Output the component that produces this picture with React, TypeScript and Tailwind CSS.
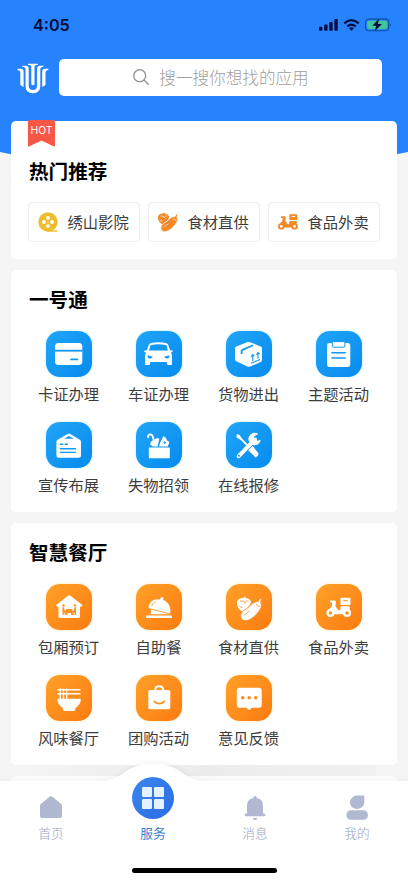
import React from 'react'

interface IconProps {
    cut: string;
}

interface ServiceItem {
    name: string;
    Icon: React.FC<IconProps>;
}

interface SectionProps {
    title: string;
    items: ServiceItem[];
    tone: 'blue' | 'orange';
}

/* Service glyphs share a 46x46 grid, cut is the colour of the inner details */
const CardIcon = ({ cut }: IconProps) => (
    <>
        <rect x="9" y="12" width="27.3" height="22" rx="3.4" />
        <path d="M9 19.7H36.3" stroke={cut} strokeWidth="1.8" />
        <path d="M25 28.4H31.4" stroke={cut} strokeWidth="1.7" strokeLinecap="round" />
    </>
)

const CarIcon = ({ cut }: IconProps) => (
    <>
        <path d="M15 11.9Q22.5 10.6 30 11.9Q31.6 12.2 32.3 14L34.1 19.2L36.6 19.6Q37.3 21.3 34.9 21.7Q36 23.3 36 25.4V33Q36 34 35 34H32.2Q31 34 30.9 32.8L30.7 31H14.3L14.1 32.8Q14 34 12.8 34H10Q9 34 9 33V25.4Q9 23.3 10.1 21.7Q7.7 21.3 8.4 19.6L10.9 19.2L12.7 14Q13.4 12.2 15 11.9Z" />
        <path d="M15.4 14Q22.5 12.7 29.6 14Q30.3 14.2 30.6 15L32 19.5H13L14.4 15Q14.7 14.2 15.4 14Z" fill={cut} />
        <path d="M11.4 24.3L16.8 25.8Q15.8 27.9 12.8 27.2Q11.2 26.5 11.4 24.3ZM33.6 24.3L28.2 25.8Q29.2 27.9 32.2 27.2Q33.8 26.5 33.6 24.3Z" fill={cut} />
    </>
)

const BoxIcon = ({ cut }: IconProps) => (
    <>
        <path d="M21 11.2Q22.6 10.6 24.1 11.2L34.6 15.5Q36 16.2 36 17.6V29Q36 30.4 34.7 31L24 35.6Q22.7 36.1 21.4 35.5L10.3 30.2Q9 29.5 9 28V17.6Q9 16.2 10.4 15.6Z" />
        <path d="M15.6 23V20.4Q15.6 19.4 16.6 18.9L27 14.2" fill="none" stroke={cut} strokeWidth="1.8" />
        <path d="M26.8 30V24.2M25.2 25.9L26.8 23.7L28.4 25.2M32 27.8V22M30.4 23.7L32 21.5L33.6 23M25 32.3L34 28.6" fill="none" stroke={cut} strokeWidth="1.1" />
    </>
)

const ClipboardIcon = ({ cut }: IconProps) => (
    <>
        <rect x="11" y="12" width="23.3" height="24" rx="2.4" />
        <rect x="16.3" y="10.6" width="12.6" height="5.6" rx="1" stroke={cut} strokeWidth="1" />
        <path d="M16 21.7H29.2M16 27H29.2" stroke={cut} strokeWidth="1.6" strokeLinecap="round" />
    </>
)

const SignIcon = ({ cut }: IconProps) => (
    <>
        <path d="M21.7 12.1Q23 11.1 24.3 12.1L33 17.2Q35 17.8 35 19.8V33.3Q35 35.8 32.5 35.8H12.9Q10.4 35.8 10.4 33.3V19.8Q10.4 17.8 12.4 17.2Z" />
        <path d="M18 16.8L23 13.9L28 16.8Z" fill={cut} />
        <path d="M14.4 22.3H16.6M19.2 22.3H21.4M14.4 26.7H29.5M14.4 30.4H29.5" stroke={cut} strokeWidth="1.4" strokeLinecap="round" />
    </>
)

const LostIcon = ({ cut }: IconProps) => (
    <>
        <rect x="12.8" y="25.4" width="21" height="10.8" rx=".5" />
        <path d="M12.1 15.3Q11.7 12.5 14.3 12.4Q16.5 12.5 16.8 15L18.1 19" fill="none" stroke="#fff" strokeWidth="1.8" strokeLinecap="round" />
        <path d="M14.3 22.8Q13.9 19.8 16.2 18.9Q16.7 17.2 18.8 17.5Q19.5 15.7 23.3 16.4L21.7 24.4H17Z" />
        <path d="M23 24.4L24.4 20.3L27.4 14L30 16L30.9 18.4L33.4 20L31.8 24.4Z" />
        <path d="M27.4 20.6H30M28.7 19.3V21.9" stroke={cut} strokeWidth="1" />
    </>
)

const ToolsIcon = ({ cut }: IconProps) => (
    <>
        <path d="M12.7 34.2L29 17.5" stroke="#fff" strokeWidth="4" strokeLinecap="round" />
        <path d="M32.2 11.9A6.2 6.2 0 1 0 34.8 17.7L31.5 18.7L28.5 17.6L28 14.5Z" />
        <circle cx="13" cy="33.7" r="1" fill={cut} />
        <path d="M10.6 12.3L13.4 12.8L16 16.6L14.5 18.1L10.7 15.4Z" />
        <path d="M14 15.8L25 27" stroke="#fff" strokeWidth="1.8" />
        <path d="M21.7 28.2L26.7 23.5L32.8 31.3Q33 34.8 29.5 35.8Z" stroke={cut} strokeWidth=".8" />
    </>
)

const HouseIcon = ({ cut }: IconProps) => (
    <>
        <path d="M22 11.7Q23.2 10.9 24.4 11.7L36.1 20.8Q36.9 22.5 35.3 22.8H34V32.5Q34 34 32.5 34H14Q12.5 34 12.5 32.5V22.8H11.3Q9.7 22.5 10.5 20.8Z" />
        <circle cx="17.5" cy="21.4" r="1.2" fill={cut} />
        <circle cx="29" cy="21.4" r="1.2" fill={cut} />
        <path d="M16.5 23.2H18L18.6 26.5H19.7V31H18.7V28.7H17.8V31H16.5ZM30 23.2H28.5L27.9 26.5H26.8V31H27.8V28.7H28.7V31H30Z" fill={cut} />
        <path d="M20.2 25H26.3L27 31H25.3L24.8 29H21.7L21.2 31H19.5Z" fill={cut} />
    </>
)

const ClocheIcon = ({ cut }: IconProps) => (
    <>
        <rect x="10" y="31.6" width="26" height="2.5" rx="1" />
        <path d="M15 25L34.3 30.3H14.7Z" />
        <path d="M12.2 24.3C12 17.5 17.6 14.3 24 15Q24 12.6 26.3 12.7Q28.6 13.3 27.5 15.7C32.8 17.8 35.7 23.3 34.5 30Z" stroke={cut} strokeWidth=".7" />
        <path d="M15.6 22Q16.7 18.7 19.7 17.7" fill="none" stroke={cut} strokeWidth=".7" strokeLinecap="round" />
    </>
)

const VegetableIcon = ({ cut }: IconProps) => (
    <>
        <path d="M11.2 21Q10 16.8 13.3 14.8Q15.3 13.6 17.6 14L18.7 12.4L20 14.2Q24 14.5 25 17.6Q25.2 20.5 22 23.5L16.2 27.6Q12 25.3 11.2 21Z" />
        <path d="M14 17L17.6 17.3L18.9 19.4L20 17.3L22.6 16.8M13.3 22.3Q15 23.6 16.6 23.2" fill="none" stroke={cut} strokeWidth=".7" />
        <path d="M14.7 30.6C15.8 26.4 20.3 25.5 23.3 22.6C26 19.6 28.6 17.4 32.2 17.6L33.8 14.4L35.6 14.7L34.7 18.5C36.6 22.6 34 26.2 31 29.5C27.5 33.8 21.5 37.8 17.2 36.3Q14 34.5 14.7 30.6Z" stroke={cut} strokeWidth=".8" />
        <path d="M18.2 31.3Q20.4 28.7 23.8 26.9M30.4 20L31.4 22L33.6 22.3" fill="none" stroke={cut} strokeWidth=".7" strokeLinecap="round" />
    </>
)

const ScooterIcon = ({ cut }: IconProps) => (
    <>
        <path d="M14 16.4H18.7Q20.2 16.5 20 18.2L19.4 22.3L22.5 26.3H24.3V23.4Q24.3 22.2 25.5 22.2H33Q34.3 22.4 33.9 24L33.3 26L34.7 28V30.3H12.8L11.2 27L15.5 22.7L16.4 18.4H14Z" />
        <rect x="24.5" y="13.8" width="10" height="7.3" rx=".8" />
        <path d="M27.3 16.7H31.8" stroke={cut} strokeWidth="1.1" />
        <circle cx="14.4" cy="29" r="4" />
        <circle cx="14.4" cy="29" r="1.7" fill={cut} />
        <circle cx="31" cy="29" r="4" />
        <circle cx="31" cy="29" r="1.7" fill={cut} />
    </>
)

const BowlIcon = ({ cut }: IconProps) => (
    <>
        <path d="M11.4 14.7H34.5M11.4 18.7H34.5" stroke="#fff" strokeWidth="1.6" />
        <path d="M14.3 13.4V26M17.5 13.4V26M20.7 13.4V26" stroke="#fff" strokeWidth="1.3" />
        <path d="M11.4 23.7H34.8Q34.9 29.5 29.4 33V34Q29.4 35.9 27.5 35.9H18.7Q16.8 35.9 16.8 34V33Q11.3 29.5 11.4 23.7Z" />
        <path d="M13 16.7H22" stroke={cut} strokeWidth=".4" />
    </>
)

const BagIcon = ({ cut }: IconProps) => (
    <>
        <path d="M19.2 17V14.8Q19.4 11.2 23.2 11.2Q27 11.2 27.2 14.8V17" fill="none" stroke="#fff" strokeWidth="1.9" />
        <rect x="12.3" y="15" width="22" height="19.2" rx="1.7" />
        <path d="M18.2 26.3Q23.3 31 28.4 26.3" fill="none" stroke={cut} strokeWidth="1.7" strokeLinecap="round" />
    </>
)

const ChatIcon = ({ cut }: IconProps) => (
    <>
        <path d="M13.5 12.8H33Q35.7 12.8 35.7 15.5V30Q35.7 32.7 33 32.7H26L23.8 34.8Q23.2 35.3 22.6 34.8L20.4 32.7H13.5Q10.8 32.7 10.8 30V15.5Q10.8 12.8 13.5 12.8Z" />
        <circle cx="16.7" cy="22.7" r="1.8" fill={cut} />
        <circle cx="23.2" cy="22.7" r="1.8" fill={cut} />
        <circle cx="29.7" cy="22.7" r="1.8" fill={cut} />
    </>
)

const passItems: ServiceItem[] = [
    { name: '卡证办理', Icon: CardIcon },
    { name: '车证办理', Icon: CarIcon },
    { name: '货物进出', Icon: BoxIcon },
    { name: '主题活动', Icon: ClipboardIcon },
    { name: '宣传布展', Icon: SignIcon },
    { name: '失物招领', Icon: LostIcon },
    { name: '在线报修', Icon: ToolsIcon },
]

const diningItems: ServiceItem[] = [
    { name: '包厢预订', Icon: HouseIcon },
    { name: '自助餐', Icon: ClocheIcon },
    { name: '食材直供', Icon: VegetableIcon },
    { name: '食品外卖', Icon: ScooterIcon },
    { name: '风味餐厅', Icon: BowlIcon },
    { name: '团购活动', Icon: BagIcon },
    { name: '意见反馈', Icon: ChatIcon },
]

const StatusBar = () => (
    <div className="flex h-[50px] items-center justify-between pl-[33px] pr-4 text-[#050b3c]">
        <span className="font-[Inter,sans-serif] text-[16.2px] font-semibold leading-none">4:05</span>
        <svg width="73" height="14" viewBox="0 0 73 14" fill="currentColor">
            <rect x="0" y="8.8" width="3.3" height="4" rx=".8" />
            <rect x="5.2" y="6.5" width="3.3" height="6.3" rx=".8" />
            <rect x="10.3" y="4" width="3.3" height="8.8" rx=".8" />
            <rect x="15.4" y="1" width="3.3" height="11.8" rx=".8" />
            <g fill="none" stroke="currentColor" strokeWidth="2.2">
                <path d="M25.3 5.4Q32.5 -1.2 39.7 5.4" />
                <path d="M28.2 8.5Q32.5 4.7 36.8 8.5" />
            </g>
            <path d="M30 10.2Q32.5 8.4 35 10.2L32.5 12.8Z" />
            <rect x="46.6" y="1.1" width="23.2" height="11.6" rx="3.4" fill="none" stroke="#0d4fa8" strokeWidth="1.1" />
            <rect x="48.2" y="2.7" width="20" height="8.4" rx="2" fill="#43c79a" />
            <path d="M71 5.2Q73 6.9 71 8.6Z" fill="#0d4fa8" />
            <path d="M60.2 .6L53.3 7.7H57.3L55.6 13.2L63 5.9H58.8Z" />
        </svg>
    </div>
)

const Logo = () => (
    <svg width="32" height="32" viewBox="0 0 32 32" fill="#fff">
        <path d="M.5 6.8H3.6Q6.6 6.9 6.6 9.8V25L3.3 23V10.3Q3.3 8.6 .5 8Z" />
        <path d="M31.3 6.8H28.2Q25.2 6.9 25.2 9.8V25L28.5 23V10.3Q28.5 8.6 31.3 8Z" />
        <path d="M5.4 3.7H8.8Q11.7 3.9 11.7 6.8V23.5Q11.7 28 15.9 28Q20.1 28 20.1 23.5V6.8Q20.1 3.9 23 3.7H26.4V4.8Q23.3 5.2 23.3 7.4V23.7Q23.3 31.3 15.9 31.3Q8.5 31.3 8.5 23.7V7.4Q8.5 5.2 5.4 4.8Z" />
        <path d="M10.9 1.7H20.9V2.8Q17.5 3 17.5 4.8V22.3Q15.9 24 14.3 22.3V4.8Q14.3 3 10.9 2.8Z" />
    </svg>
)

const Header = () => (
    <header>
        <StatusBar />
        <div className="flex items-center gap-[10px] pl-[17px] pr-[26px] pt-[9px]">
            <Logo />
            <div className="flex h-[37px] flex-1 items-center justify-center gap-[9px] rounded-[5px] bg-white pb-px text-[#a0a0a0]">
                <svg width="18" height="18" viewBox="0 0 18 18" fill="none" stroke="#8f8f8f" strokeWidth="1.3" strokeLinecap="round">
                    <circle cx="7.7" cy="7.7" r="6" />
                    <path d="M12.2 12.2L16.2 16.3" />
                </svg>
                <span className="text-[16.6px] font-light leading-none">搜一搜你想找的应用</span>
            </div>
        </div>
    </header>
)

const Chip = ({ name, children }: { name: string; children: React.ReactNode }) => (
    <div className="flex h-10 items-center gap-[9.5px] whitespace-nowrap rounded-[4px] border border-[#f0f0f0] pl-[9px] text-[15.3px] text-[#3c3c3c]">
        {children}
        <span className="pb-px">{name}</span>
    </div>
)

const HotCard = () => (
    <section className="relative h-[138px] rounded-[5px] bg-white px-[17px] pt-9">
        <div className="absolute left-[17px] top-[-1px] h-[27px] w-[27px]">
            <svg width="27" height="27" viewBox="0 0 27 27" className="absolute inset-0">
                <path d="M2 0H25Q27 0 27 2V25Q27 27.4 25 26L13.5 20.5L2 26Q0 27.4 0 25V2Q0 0 2 0Z" fill="#f95745" />
            </svg>
            <span className="relative block pt-[4px] text-center font-[Inter,sans-serif] text-[10.3px] leading-[13px] text-white">HOT</span>
        </div>
        <h2 className="pl-px text-[19.6px] font-bold leading-[27px] text-black">热门推荐</h2>
        <div className="mt-[18px] grid grid-cols-3 gap-2">
            <Chip name="绣山影院">
                <svg width="20" height="20" viewBox="0 0 20 20" className="shrink-0">
                    <circle cx="10" cy="10" r="9.7" fill="#edbd2d" />
                    <path d="M9 19H19.3" stroke="#edbd2d" strokeWidth="1.4" />
                    <g fill="#fff">
                        <circle cx="10" cy="5.9" r="1.9" />
                        <circle cx="5.9" cy="10" r="1.9" />
                        <circle cx="14.1" cy="10" r="1.9" />
                        <circle cx="10" cy="14.1" r="1.9" />
                        <circle cx="10" cy="10" r=".6" />
                    </g>
                </svg>
            </Chip>
            <Chip name="食材直供">
                <svg width="20" height="20" viewBox="11 12 25 25" fill="#f18a2b" className="shrink-0">
                    <VegetableIcon cut="#fff" />
                </svg>
            </Chip>
            <Chip name="食品外卖">
                <svg width="20" height="20" viewBox="10.3 11 25 25" fill="#ee8a27" className="shrink-0">
                    <ScooterIcon cut="#fff" />
                </svg>
            </Chip>
        </div>
    </section>
)

const Section = ({ title, items, tone }: SectionProps) => {
    const tile = tone === 'blue'
        ? 'from-[#1fa5f7] to-[#068bee] shadow-[0_0_3px_#b5eaff]'
        : 'from-[#ffa127] to-[#fa7b10] shadow-[0_0_3px_#ffe3a8]'
    const cut = tone === 'blue' ? '#1198f3' : '#fc8e1c'

    return (
        <section className="h-[242px] rounded-[5px] bg-white px-[13px] pt-[15px]">
            <h2 className="pl-[5px] text-[19.6px] font-bold leading-[27px] text-black">{title}</h2>
            <div className="mt-[19px] grid grid-cols-4 gap-y-4">
                {items.map(({ name, Icon }) => (
                    <div key={name} className="flex flex-col items-center">
                        <div className={`h-[46px] w-[46px] rounded-[14px] bg-gradient-to-br ${tile}`}>
                            <svg width="46" height="46" viewBox="0 0 46 46" fill="#fff">
                                <Icon cut={cut} />
                            </svg>
                        </div>
                        <span className="mr-px mt-[3px] text-[15.3px] leading-[26px] text-[#3c3c3c]">{name}</span>
                    </div>
                ))}
            </div>
        </section>
    )
}

const TabBar = () => (
    <nav className="relative h-[102px] bg-white pt-[14px] text-[12.7px] font-light text-[#98a2bf] shadow-[0_-1px_5px_rgba(0,0,0,0.04)]">
        {/* bump behind the active tab */}
        <svg width="112" height="20" viewBox="0 0 112 20" className="absolute left-[97px] top-[-18px] drop-shadow-[0_-2px_2px_rgba(0,0,0,0.04)]">
            <path d="M0 18.5C12 18.5 19 15 26 10.5C42 -2.8 70 -2.8 86 10.5C93 15 100 18.5 112 18.5V20H0Z" fill="#fff" />
        </svg>
        <div className="relative grid grid-cols-4">
            <div className="flex flex-col items-center">
                <svg width="24" height="24" viewBox="0 0 24 24" fill="#b0b9d1">
                    <path d="M10.8 1.6Q12 .7 13.2 1.6L22 8.7Q23 9.5 23 10.8V21Q23 23 21 23H3Q1 23 1 21V10.8Q1 9.5 2 8.7Z" />
                </svg>
                <span className="mt-1 leading-5">首页</span>
            </div>
            <div className="flex flex-col items-center text-[#3b7fd0]">
                <div className="-mt-[18px] flex h-[42px] w-[42px] items-center justify-center rounded-full bg-gradient-to-br from-[#3c86ef] to-[#2b6ce3]">
                    <div className="grid grid-cols-2 gap-[2.5px]">
                        <i className="h-[10px] w-[10px] rounded-[1px] bg-[#e4f1ff]" />
                        <i className="h-[10px] w-[10px] rounded-[1px] bg-[#e4f1ff]" />
                        <i className="h-[10px] w-[10px] rounded-[1px] bg-[#e4f1ff]" />
                        <i className="h-[10px] w-[10px] rounded-[1px] bg-[#e4f1ff]" />
                    </div>
                </div>
                <span className="mt-1 font-normal leading-5">服务</span>
            </div>
            <div className="flex flex-col items-center">
                <svg width="24" height="26" viewBox="0 0 24 26" fill="#b0b9d1" className="-mb-0.5">
                    <circle cx="12" cy="2.6" r="1.7" />
                    <path d="M4 19V10.5Q4 3 12 3Q20 3 20 10.5V19Z" />
                    <rect x="1.6" y="18.5" width="20.8" height="2.8" rx="1.4" />
                    <path d="M9.6 22.9H14.4Q14 24.9 12 24.9Q10 24.9 9.6 22.9Z" />
                </svg>
                <span className="mt-1 leading-5">消息</span>
            </div>
            <div className="flex flex-col items-center">
                <svg width="24" height="26" viewBox="0 0 24 26" fill="#b0b9d1" className="-mb-0.5">
                    <path d="M12 .6H18.3Q19.3 .6 19.3 1.6V7A7.2 6.7 0 1 1 12 .6Z" />
                    <rect x="1.4" y="15.3" width="21.5" height="9.5" rx="4.4" />
                </svg>
                <span className="mt-1 leading-5">我的</span>
            </div>
        </div>
        <div className="mx-auto mt-[25px] h-[5px] w-[145px] rounded-full bg-black" />
    </nav>
)

const App = () => {
    return (
        <div className="flex h-[883px] w-[408px] flex-col overflow-hidden bg-[#f5f5f5] font-['Noto_Sans_CJK_SC',sans-serif]">
            <main className="relative isolate min-h-0 flex-1">
                {/* curved backdrop */}
                <svg width="408" height="175" viewBox="0 0 408 175" className="absolute left-0 top-0 -z-10">
                    <path d="M0 0H408V152Q204 196 0 152Z" fill="#2783fd" />
                </svg>
                <Header />
                <div className="mx-[11px] mt-[25px] flex flex-col gap-[11px]">
                    <HotCard />
                    <Section title="一号通" items={passItems} tone="blue" />
                    <Section title="智慧餐厅" items={diningItems} tone="orange" />
                </div>
                <div className="mx-8 h-[11px] bg-gradient-to-r from-[#f3f3f3] via-[#ececec] to-[#f1f1f1]" />
                <div className="mx-[11px] h-[5px] rounded-t-[5px] bg-[#fcfcfc]" />
            </main>
            <TabBar />
        </div>
    )
}

export default App
